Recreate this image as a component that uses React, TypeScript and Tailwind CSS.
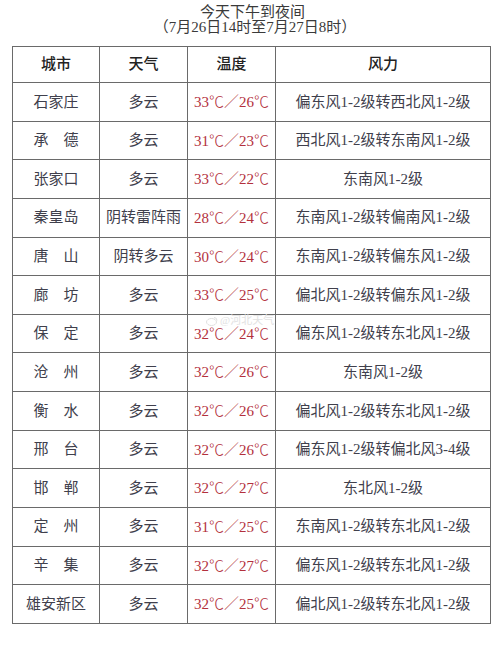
type Row = {
  city: string;
  weather: string;
  hi: string;
  lo: string;
  wind: string;
};

const rows: Row[] = [
  { city: '石家庄', weather: '多云', hi: '33', lo: '26', wind: '偏东风1-2级转西北风1-2级' },
  { city: '承　德', weather: '多云', hi: '31', lo: '23', wind: '西北风1-2级转东南风1-2级' },
  { city: '张家口', weather: '多云', hi: '33', lo: '22', wind: '东南风1-2级' },
  { city: '秦皇岛', weather: '阴转雷阵雨', hi: '28', lo: '24', wind: '东南风1-2级转偏南风1-2级' },
  { city: '唐　山', weather: '阴转多云', hi: '30', lo: '24', wind: '东南风1-2级转偏东风1-2级' },
  { city: '廊　坊', weather: '多云', hi: '33', lo: '25', wind: '偏北风1-2级转偏东风1-2级' },
  { city: '保　定', weather: '多云', hi: '32', lo: '24', wind: '偏东风1-2级转东北风1-2级' },
  { city: '沧　州', weather: '多云', hi: '32', lo: '26', wind: '东南风1-2级' },
  { city: '衡　水', weather: '多云', hi: '32', lo: '26', wind: '偏北风1-2级转东北风1-2级' },
  { city: '邢　台', weather: '多云', hi: '32', lo: '26', wind: '偏东风1-2级转偏北风3-4级' },
  { city: '邯　郸', weather: '多云', hi: '32', lo: '27', wind: '东北风1-2级' },
  { city: '定　州', weather: '多云', hi: '31', lo: '25', wind: '东南风1-2级转东北风1-2级' },
  { city: '辛　集', weather: '多云', hi: '32', lo: '27', wind: '偏东风1-2级转东北风1-2级' },
  { city: '雄安新区', weather: '多云', hi: '32', lo: '25', wind: '偏北风1-2级转东北风1-2级' },
];

const cell =
  'flex items-center justify-center border-r border-b border-[#6a6a6a] whitespace-nowrap';

// ℃ and the full-width slash come from the CJK face so they take a full em
function Temp({ hi, lo }: { hi: string; lo: string }) {
  const cjk = "font-['Noto_Sans_CJK_SC'] font-light";
  return (
    <span>
      {hi}
      <span className={cjk}>℃</span>
      <span className={cjk}>／</span>
      {lo}
      <span className={cjk}>℃</span>
    </span>
  );
}

export default function App() {
  return (
    <div
      className="relative h-[646px] w-[500px] bg-white text-[15px] text-[#40404c]"
      style={{ fontFamily: '"Liberation Serif", "Noto Sans CJK SC", serif' }}
    >
      <div className="flex h-[46px] flex-col items-center pt-[5px] text-[15px] leading-[15px] text-[#3a3a3a]">
        <div className="pl-[5px]">今天下午到夜间</div>
        <div className="pl-[10px]">（7月26日14时至7月27日8时）</div>
      </div>

      <div className="ml-[12px] grid w-[479px] grid-cols-[87px_88px_88px_215px] border-l border-t border-[#6a6a6a]">
        {['城市', '天气', '温度', '风力'].map((h) => (
          <div key={h} className={cell + ' h-[36px] font-medium text-[#222]'}>
            {h}
          </div>
        ))}
        {rows.map((r) => (
          <div key={r.city} className="contents">
            <div className={cell + ' h-[38.64px]'}>{r.city}</div>
            <div className={cell + ' h-[38.64px]'}>{r.weather}</div>
            <div className={cell + ' h-[38.64px] text-[#b3303c]'}>
              <Temp hi={r.hi} lo={r.lo} />
            </div>
            <div className={cell + ' h-[38.64px]'}>{r.wind}</div>
          </div>
        ))}
      </div>

      {/* faint weibo watermark */}
      <div className="pointer-events-none absolute left-[206px] top-[315px] flex items-center gap-[2px] text-[11px] leading-[11px] text-[#e2e2e2]">
        <svg width="12" height="10" viewBox="0 0 12 10" fill="none" stroke="#e0e0e0" strokeWidth="1">
          <ellipse cx="5.5" cy="6" rx="5" ry="3.5" />
          <path d="M8 1.5a3 3 0 0 1 3 3" />
        </svg>
        <span>@河北天气</span>
      </div>
    </div>
  );
}
